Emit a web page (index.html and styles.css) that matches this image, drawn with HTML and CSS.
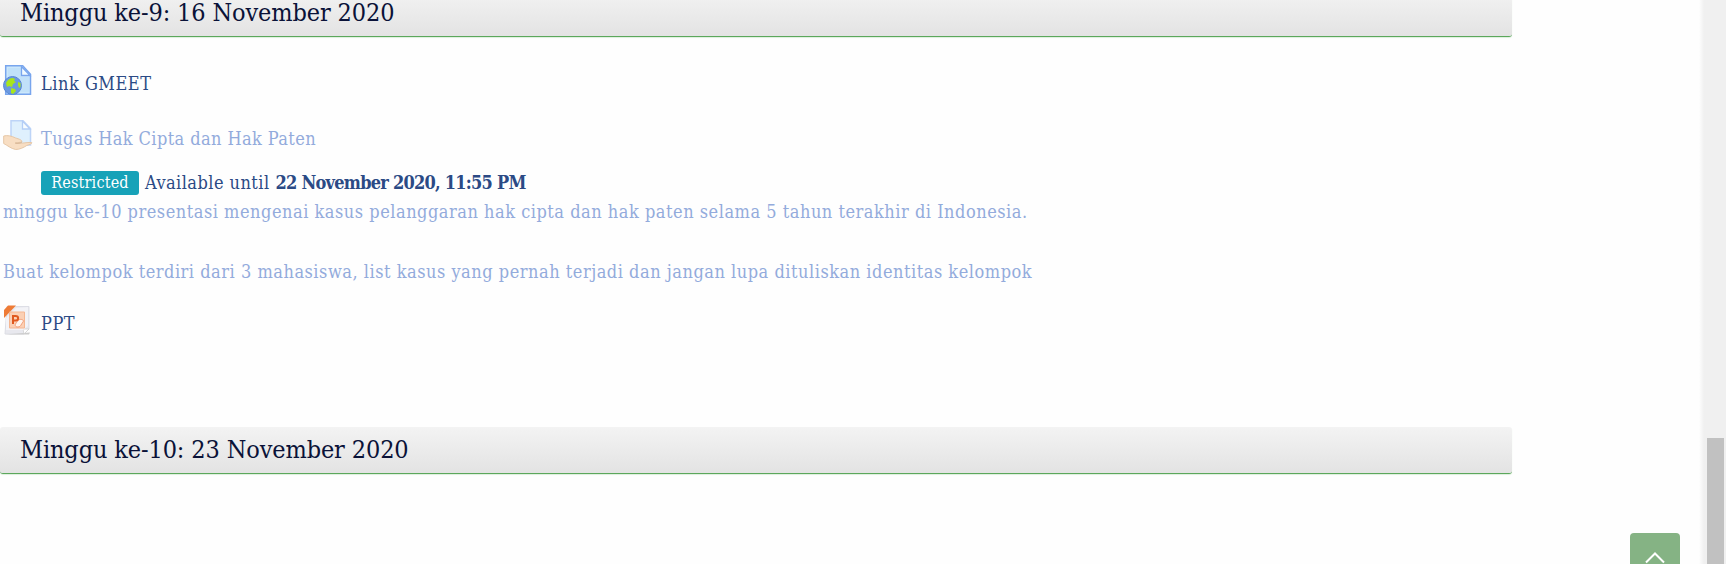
FILE: index.html
```html
<!DOCTYPE html>
<html lang="id">
<head>
<meta charset="utf-8">
<title>Course</title>
<link rel="stylesheet" href="styles.css">
</head>
<body>
<main class="course">
  <section class="week">
    <h3 class="section-title">Minggu ke-9: 16 November 2020</h3>
    <ul class="activities">
      <li class="activity link">
        <svg class="icon" viewBox="0 0 30 30"><path d="M2.700 .8h17l7.800 8.500v20H2.700z" fill="#cbe7fb" stroke="#78a5ed" stroke-width="1.500"/><path d="M5 3h13v9h8v15H5z" fill="#c1e1f9"/><path d="M18.500 1.500v9h8.500z" fill="#f0faff" stroke="#78a5ed" stroke-width="1.300"/><circle cx="9.500" cy="20.500" r="9" fill="#6c99df" stroke="#5787d5"/><path d="M3 18c1-3 4-5 7-5l2 1-1 2 2 1-3 2-1 3-3-1-2 1zM8 23l4 1 1 2-3 3-2-1zM15 17l2.500 1v4l-1.500 1-1-3z" fill="#a9e51b"/></svg>
        <a class="name">Link GMEET</a>
      </li>
      <li class="activity task dimmed">
        <svg class="icon" viewBox="0 0 30 30"><path d="M8 .8h12l7.500 7.700V25H8z" fill="#dff0fd" stroke="#bdd4f7" stroke-width="1.500"/><path d="M19.500 1v8h7.500z" fill="#f8fdff" stroke="#b4cef6" stroke-width="1.300"/><path d="M.7 16c4-1 8 0 12 2 3 1 7 2 6 4l-6 1c6 1 11-1 16-.5 1 1-2 2-5 3-3 2-7 4-11 4-5-1-8-4-12-6z" fill="#f8dec3" stroke="#e6c7a7"/><path d="M12 23c3 1 5 0 7-1" fill="none" stroke="#d9b796"/></svg>
        <a class="name tight">Tugas Hak Cipta dan Hak Paten</a>
      </li>
    </ul>
    <div class="availability"><span class="badge">Restricted</span><span class="until">Available until</span><strong>22 November 2020, 11:55 PM</strong></div>
    <div class="description dimmed">
      <p>minggu ke-10 presentasi mengenai kasus pelanggaran hak cipta dan hak paten selama 5 tahun terakhir di Indonesia.</p>
      <p>Buat kelompok terdiri dari 3 mahasiswa, list kasus yang pernah terjadi dan jangan lupa dituliskan identitas kelompok</p>
    </div>
    <div class="activity slides">
      <svg class="icon" viewBox="0 0 30 30"><path d="M4 1.500h22V24l-5 5H2z" fill="#e8e8ee" stroke="#dddee5"/><path d="M2 29.500h24l1-2z" fill="#ccc"/><path d="M21 29l-1-5 6 0z" fill="#fff" stroke="#ccc" stroke-width=".7"/><path d="M3 13L13 3l12-1v19l-5 4H3z" fill="#f3f3f7"/><path d="M1 13V5l4-4.500h8z" fill="#ee7b36"/><path d="M6.500 7h15v16h-15z" fill="#fbd0b5" stroke="#f5b691"/><path d="M14 17c1-4 8-3 6 0-2 2-2 5-5 5-4 0-3-3-1-5z" fill="#fff6f0" stroke="#f08f64" stroke-width=".8"/><path d="M10 19v-8h2.500c3.500 0 3.500 4.500 0 4.500H10" fill="none" stroke="#e0591f" stroke-width="2"/></svg>
      <a class="name">PPT</a>
    </div>
  </section>
  <section class="week">
    <h3 class="section-title">Minggu ke-10: 23 November 2020</h3>
  </section>
</main>
<div class="scrollbar"><div class="thumb"></div></div>
<a class="to-top"><svg viewBox="0 0 20 12"><path d="M1 10.500L10 1.500l9 9" fill="none" stroke="#fff" stroke-width="2"/></svg></a>
</body>
</html>
```
FILE: styles.css
```css
* { box-sizing: border-box; }
html, body { margin: 0; height: 564px; overflow: hidden; }
body { display: flex; background: #fefefe; color: #2b4a85; font: 18px/30px "Roboto Slab", "DejaVu Serif Condensed", "DejaVu Serif", serif; font-stretch: condensed; letter-spacing: .52px; }
.course { flex: 1; white-space: nowrap; }
.section-title { width: 1512px; height: 47px; margin: 0; padding: 0 20px; border-bottom: 1px solid #5ba75b; border-radius: 3px; box-shadow: 0 1px 1px #dcefdc; background: linear-gradient(#f3f3f3, #e3e3e3); color: #0a1238; font-size: 25px; font-weight: 400; line-height: 46px; letter-spacing: -.12px; }
.week:first-child { height: 437px; margin-top: -10px; }
.activities { margin: 0; padding: 0; list-style: none; }
.activity { display: flex; gap: 8px; height: 30px; padding-left: 3px; }
.icon { width: 30px; height: 30px; flex: none; }
.name { line-height: 37px; }
.tight { letter-spacing: .41px; }
.link { margin-top: 28px; }
.task { margin-top: 25px; }
.dimmed { color: #93abdc; }
.availability { display: flex; align-items: center; height: 30px; margin-top: 18px; padding-left: 41px; }
.badge { width: 98px; height: 24px; margin-right: 6px; border-radius: 3px; background: #17a2b8; color: #fff; font-size: 16px; line-height: 24px; text-align: center; letter-spacing: .2px; }
.until { letter-spacing: .45px; }
strong { margin-left: 6px; letter-spacing: -.75px; }
.description { margin-top: -1px; padding-left: 3px; }
.description p { margin: 0 0 30px; }
.slides { margin-top: -12px; }
.scrollbar { width: 27px; padding: 438px 2px 0 8px; background: linear-gradient(90deg, #fefefe, #f0f0f0 5px); }
.thumb { height: 126px; background: #c1c1c1; }
.to-top { position: absolute; left: 1630px; top: 533px; width: 50px; height: 50px; border-radius: 4px; background: #85b384; padding: 19px 15px; }
.to-top svg { display: block; width: 20px; height: 12px; }
```
